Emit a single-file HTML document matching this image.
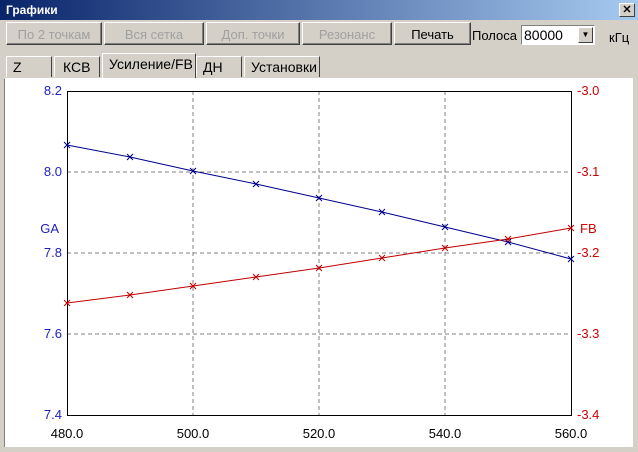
<!DOCTYPE html><html><head><style>
body{margin:0;width:638px;height:452px;background:#d4d0c8;font-family:"Liberation Sans",sans-serif;font-size:13px;position:relative;overflow:hidden}
.t{position:absolute;left:0;top:0;width:638px;height:20px;background:linear-gradient(90deg,#0a246a,#a6caf0);color:#fff;font-weight:bold;font-size:12px}
.t span{position:absolute;left:6px;top:3px}
.x{position:absolute;right:3px;top:3px;width:14px;height:12px;background:#d4d0c8;border:1px solid;border-color:#fff #404040 #404040 #fff;color:#000;font-size:11px;text-align:center;line-height:12px}
.b{position:absolute;top:22px;height:23px;background:#d4d0c8;border:1px solid;border-color:#fff #404040 #404040 #fff;box-shadow:inset -1px -1px #808080;text-align:center;line-height:23px;color:#a0a0a0;box-sizing:border-box}
.tab{position:absolute;top:56px;height:21px;border:1px solid;border-color:#fff #404040 transparent #fff;border-bottom:none;line-height:21px;padding-left:6px;box-sizing:border-box;font-size:14px}
.p{position:absolute;left:4px;top:78px;width:628px;height:368px;background:#fff;border-left:1px solid #808080;border-top:1px solid #fff}
</style></head><body>
<div class="t"><span>Графики</span><div class="x">✕</div></div>
<div class="b" style="left:6px;width:96px">По 2 точкам</div>
<div class="b" style="left:104px;width:100px">Вся сетка</div>
<div class="b" style="left:206px;width:94px">Доп. точки</div>
<div class="b" style="left:302px;width:90px">Резонанс</div>
<div class="b" style="left:394px;width:77px;color:#000">Печать</div>
<div style="position:absolute;left:472px;top:28px">Полоса</div>
<div style="position:absolute;left:521px;top:25px;width:74px;height:20px;background:#fff;border:1px solid;border-color:#808080 #fff #fff #808080;box-sizing:border-box;padding-left:2px;line-height:18px;font-size:14px">80000<div style="position:absolute;right:1px;top:1px;width:15px;height:16px;background:#d4d0c8;border:1px solid;border-color:#fff #404040 #404040 #fff;box-sizing:border-box;font-size:8px;text-align:center;line-height:14px">▼</div></div>
<div style="position:absolute;left:609px;top:30px">кГц</div>
<div class="tab" style="left:6px;width:46px">Z</div>
<div class="tab" style="left:54px;width:46px;padding-left:8px">КСВ</div>
<div class="tab" style="left:102px;width:94px;top:53px;height:25px;background:#d4d0c8">Усиление/FB</div>
<div class="tab" style="left:196px;width:46px">ДН</div>
<div class="tab" style="left:244px;width:76px">Установки</div>
<div class="p"></div>
<svg style="position:absolute;left:0;top:0" width="638" height="452" font-family="Liberation Sans" font-size="13">
<defs><path id="m" d="M-3,-3L3,3M-3,3L3,-3"/></defs>
<g stroke="#808080" stroke-dasharray="4,3"><line x1="193" y1="91" x2="193" y2="415"/><line x1="319" y1="91" x2="319" y2="415"/><line x1="445" y1="91" x2="445" y2="415"/>
<line x1="67" y1="172" x2="571" y2="172"/><line x1="67" y1="253" x2="571" y2="253"/><line x1="67" y1="334" x2="571" y2="334"/></g>
<rect x="67.5" y="91.5" width="504" height="324" fill="none" stroke="#000"/>
<polyline fill="none" stroke="#00008c" points="67,145 130,157 193,171 256,184 319,198 382,212 445,227 508,242 571,259"/>
<polyline fill="none" stroke="#c00000" points="67,303 130,295 193,286 256,277 319,268 382,258 445,248 508,239 571,228"/>
<g stroke="#00008c"><use href="#m" x="67" y="145"/><use href="#m" x="130" y="157"/><use href="#m" x="193" y="171"/><use href="#m" x="256" y="184"/><use href="#m" x="319" y="198"/><use href="#m" x="382" y="212"/><use href="#m" x="445" y="227"/><use href="#m" x="508" y="242"/><use href="#m" x="571" y="259"/></g>
<g stroke="#c00000"><use href="#m" x="67" y="303"/><use href="#m" x="130" y="295"/><use href="#m" x="193" y="286"/><use href="#m" x="256" y="277"/><use href="#m" x="319" y="268"/><use href="#m" x="382" y="258"/><use href="#m" x="445" y="248"/><use href="#m" x="508" y="239"/><use href="#m" x="571" y="228"/></g>
<g fill="#2020c0" text-anchor="end"><text x="62" y="95">8.2</text><text x="62" y="176">8.0</text><text x="62" y="257">7.8</text><text x="62" y="338">7.6</text><text x="62" y="419">7.4</text><text x="59" y="233">GA</text></g>
<g fill="#d00000"><text x="577" y="95">-3.0</text><text x="577" y="176">-3.1</text><text x="577" y="257">-3.2</text><text x="577" y="338">-3.3</text><text x="577" y="419">-3.4</text><text x="580" y="233">FB</text></g>
<g fill="#000" text-anchor="middle"><text x="67" y="438">480.0</text><text x="193" y="438">500.0</text><text x="319" y="438">520.0</text><text x="445" y="438">540.0</text><text x="571" y="438">560.0</text></g>
</svg>
</body></html>
